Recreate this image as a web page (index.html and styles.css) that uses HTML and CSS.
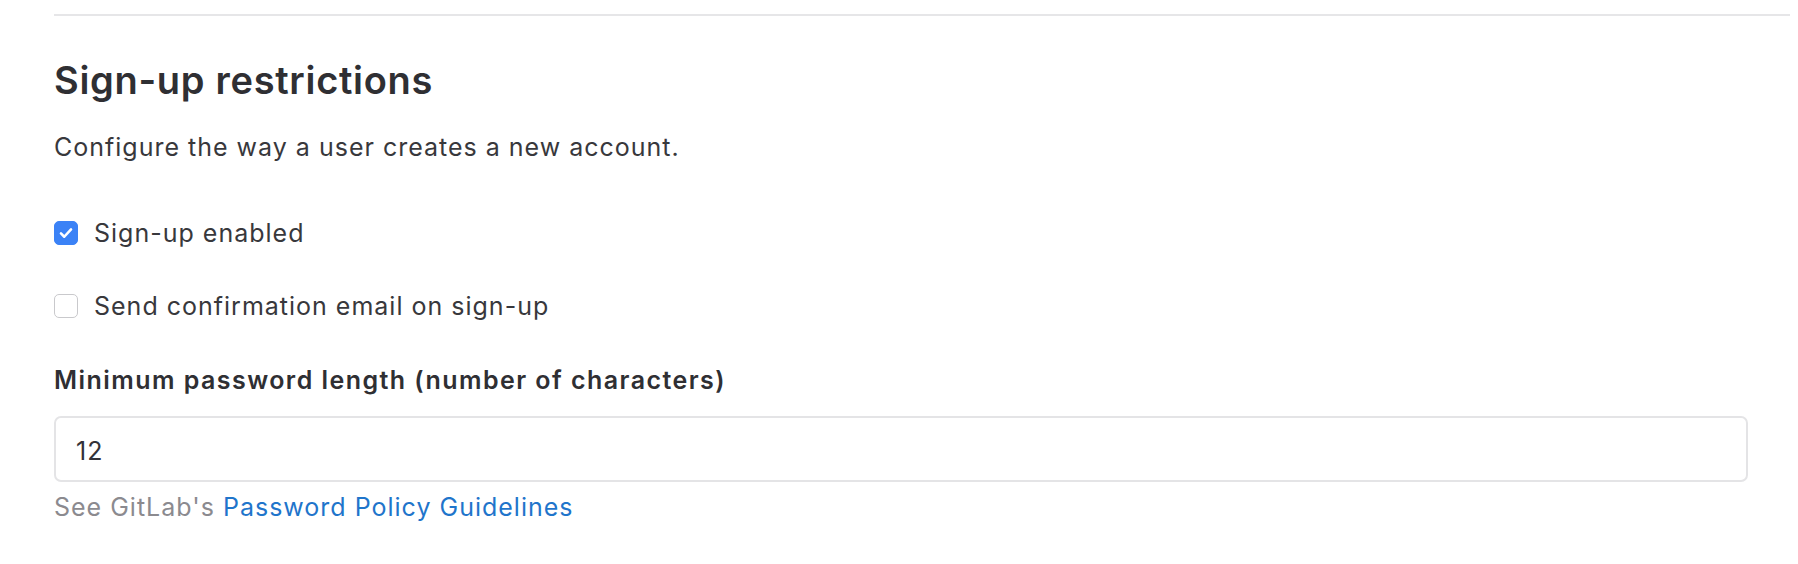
FILE: index.html
```html
<!DOCTYPE html>
<html lang="en">
<head>
<meta charset="utf-8">
<title>Sign-up restrictions</title>
<link rel="stylesheet" href="styles.css">
</head>
<body>
<section class="section">
  <div class="divider"></div>
  <h2 class="title">Sign-up restrictions</h2>
  <p class="desc">Configure the way a user creates a new account.</p>
  <label class="check-row first">
    <span class="box checked">
      <svg viewBox="0 0 24 24" width="24" height="24"><path d="M6.5 12.5l3.6 3.6L17.5 8" fill="none" stroke="#fff" stroke-width="2.8" stroke-linecap="round" stroke-linejoin="round"/></svg>
    </span>
    <span class="check-text">Sign-up enabled</span>
  </label>
  <label class="check-row second">
    <span class="box"></span>
    <span class="check-text">Send confirmation email on sign-up</span>
  </label>
  <div class="field-label">Minimum password length (number of characters)</div>
  <div class="input">12</div>
  <div class="help">See GitLab's <a class="link" href="#">Password Policy Guidelines</a></div>
</section>
</body>
</html>
```
FILE: styles.css
```css
html, body {
  margin: 0;
  padding: 0;
  background: #ffffff;
}
body {
  font-family: Inter, "Noto Sans", "Liberation Sans", sans-serif;
  color: #333238;
}
.section {
  padding: 0 8px 0 54px;
}
.divider {
  margin-top: 14px;
  height: 2px;
  background: #e6e6e8;
}
.title {
  margin: 42px 0 0;
  font-size: 38px;
  line-height: 44px;
  font-weight: 600;
  letter-spacing: 0.7px;
  color: #2f2f33;
}
.desc {
  margin: 29px 0 0;
  font-size: 25px;
  line-height: 32px;
  letter-spacing: 1px;
  color: #38383c;
}
.check-row {
  display: flex;
  align-items: center;
  gap: 16px;
  height: 32px;
  font-size: 25px;
  letter-spacing: 1px;
  color: #38383c;
}
.check-row.first { margin-top: 54px; }
.check-row.second { margin-top: 41px; }
.box {
  width: 22px;
  height: 22px;
  border: 1px solid #c9c9cc;
  border-radius: 5px;
  background: #fff;
  display: flex;
  align-items: center;
  justify-content: center;
  flex: none;
}
.box.checked {
  background: #3b82f6;
  border-color: #3b82f6;
}
.box svg { display: block; }
.field-label {
  margin-top: 42px;
  font-size: 25px;
  line-height: 32px;
  font-weight: 600;
  letter-spacing: 1.45px;
  color: #2f2f33;
}
.input {
  margin: 20px 42px 0 0;
  height: 66px;
  box-sizing: border-box;
  border: 2px solid #e4e4e6;
  border-radius: 7px;
  padding: 3px 20px 0;
  display: flex;
  align-items: center;
  font-size: 25px;
  letter-spacing: 1px;
  color: #333238;
}
.help {
  margin-top: 9px;
  font-size: 25px;
  line-height: 32px;
  letter-spacing: 1px;
  color: #8b8a8f;
}
.link {
  color: #1f75cb;
  text-decoration: none;
}
```
